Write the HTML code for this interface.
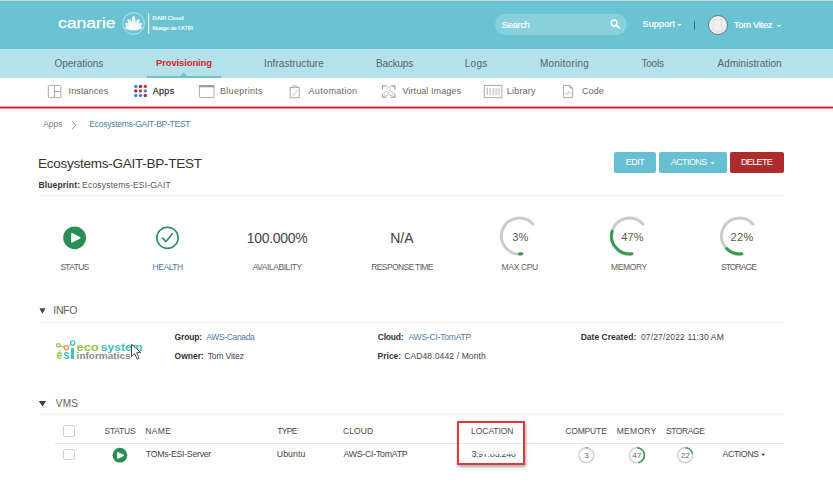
<!DOCTYPE html>
<html><head><meta charset="utf-8">
<style>
*{margin:0;padding:0;box-sizing:border-box}
html,body{width:833px;height:485px;overflow:hidden;background:#fff;font-family:"Liberation Sans",sans-serif}
.a{position:absolute}
.t{position:absolute;white-space:pre;line-height:1;font-family:"Liberation Sans",sans-serif}
svg{position:absolute;left:0;top:0}
</style></head><body>
<!-- header -->
<div class="a" style="left:0;top:0;width:833px;height:1px;background:#c6d3d8"></div>
<div class="a" style="left:0;top:1px;width:833px;height:48px;background:#69c3d3"></div>
<!-- nav -->
<div class="a" style="left:0;top:49px;width:833px;height:29px;background:#b3e2ea"></div>
<div class="a" style="left:147px;top:76px;width:74px;height:2px;background:#69c3d3"></div>
<!-- red line -->

<div class="a" style="left:0;top:108px;width:833px;height:5px;background:linear-gradient(#e6e9eb,#fff)"></div>
<!-- search pill -->
<div class="a" style="left:494.5px;top:14.3px;width:132px;height:20.7px;border-radius:10.4px;background:#88d0dc"></div>
<!-- avatar -->
<div class="a" style="left:707.6px;top:14.6px;width:20px;height:20px;border-radius:50%;background:#eeeeee;border:1.3px solid #6a777c"></div>
<!-- separators -->
<div class="a" style="left:39px;top:195px;width:745px;height:1px;background:#f1f1f1"></div>
<div class="a" style="left:39px;top:322px;width:745px;height:1px;background:#f1f1f1"></div>
<div class="a" style="left:39px;top:414px;width:745px;height:1px;background:#f1f1f1"></div>
<div class="a" style="left:55px;top:442.5px;width:729px;height:1px;background:#e6e6e6"></div>
<!-- buttons -->
<div class="a" style="left:614.4px;top:152.2px;width:41.6px;height:20.4px;border-radius:2px;background:#66c0d1"></div>
<div class="a" style="left:659px;top:152.2px;width:68.3px;height:20.4px;border-radius:2px;background:#66c0d1"></div>
<div class="a" style="left:729.9px;top:152.2px;width:54px;height:20.4px;border-radius:2px;background:#ad2d2f"></div>
<!-- checkboxes -->
<div class="a" style="left:62.7px;top:425.2px;width:12px;height:11.5px;border:1px solid #cfcfcf;border-radius:2px"></div>
<div class="a" style="left:62.7px;top:448.9px;width:12px;height:11.5px;border:1px solid #cfcfcf;border-radius:2px"></div>
<!-- red annotation box -->
<div class="a" style="left:457.3px;top:421.1px;width:68.2px;height:44.3px;border:2px solid #e0383c;box-shadow:1px 2px 3px rgba(0,0,0,.35)"></div>

<svg width="833" height="485" viewBox="0 0 833 485">
 <rect x="0" y="106.6" width="833" height="1.8" fill="#d21c22"/>
 <!-- nav triangle -->
 <path d="M179.7 76.2 L183.7 72.6 L187.7 76.2 Z" fill="#69c3d3"/>
 <!-- maple circle -->
 <circle cx="133.6" cy="23.4" r="10.8" fill="none" stroke="rgba(255,255,255,.55)" stroke-width="1"/>
 <g fill="rgba(255,255,255,.85)"><ellipse cx="133.6" cy="22.70" rx="2.0" ry="6.90" transform="rotate(0 133.6 29.6)"/><ellipse cx="133.6" cy="23.50" rx="1.8" ry="6.10" transform="rotate(28 133.6 29.6)"/><ellipse cx="133.6" cy="23.50" rx="1.8" ry="6.10" transform="rotate(-28 133.6 29.6)"/><ellipse cx="133.6" cy="24.30" rx="1.8" ry="5.30" transform="rotate(52 133.6 29.6)"/><ellipse cx="133.6" cy="24.30" rx="1.8" ry="5.30" transform="rotate(-52 133.6 29.6)"/><ellipse cx="133.6" cy="25.00" rx="1.5" ry="4.60" transform="rotate(76 133.6 29.6)"/><ellipse cx="133.6" cy="25.00" rx="1.5" ry="4.60" transform="rotate(-76 133.6 29.6)"/><rect x="131.1" y="28.6" width="5" height="1.6"/></g>
 <rect x="148" y="13" width="1.3" height="20.7" fill="rgba(255,255,255,.85)"/>
 <!-- search icon -->
 <circle cx="614.1" cy="23" r="2.9" fill="none" stroke="#fff" stroke-width="1.5"/>
 <path d="M616.3 25.2 L619.2 28" stroke="#fff" stroke-width="1.7" stroke-linecap="round"/>
 <!-- carets -->
 <path d="M677.2 23.9 L681.6 23.9 L679.4 25.9 Z" fill="#fff"/>
 <path d="M776.8 24.9 L781.4 24.9 L779.1 27 Z" fill="#fff"/>
 <rect x="694" y="20.8" width="1" height="9" fill="#3f6f7c"/>
 <!-- avatar silhouette -->
 <path d="M713 19 Q717.6 21 722.2 19 L721 25 L723 30 Q717.6 33 712.2 30 L714.2 25 Z" fill="none" stroke="#dcdcdc" stroke-width=".8"/>
 <!-- subnav icons -->
 <g fill="none" stroke="#a9a9a9" stroke-width="1">
  <rect x="48.3" y="85.4" width="12.6" height="12.3" rx="1"/>
  <path d="M54.5 85.4 V97.7 M54.5 91.5 H60.9"/>
  <rect x="199.4" y="85.6" width="14.6" height="12" rx="0.8"/>
  <rect x="290.2" y="87.4" width="9" height="10.3"/>
  <path d="M292.2 87.6 Q292.5 85.8 294.7 85.6 Q296.9 85.8 297.2 87.6 Z" fill="#fff"/>
  <rect x="484.3" y="85.4" width="17.6" height="12.3"/>
  <path d="M563.4 85.4 H570 L572.6 88 V97.7 H563.4 Z"/>
 </g>
 <rect x="199" y="85.1" width="15.4" height="2.2" fill="#9d9d9d"/>
 <path d="M292.5 93.5 L294 95.5 L297.5 90" fill="none" stroke="#cfcfcf" stroke-width="1"/>
 <g stroke="#b8b8b8" stroke-width="1.1">
  <path d="M487.2 88 V94.8 M490.1 88 V94.8 M493.2 88 V94.8 M496.1 88 V94.8 M499 88 V94.8"/>
 </g>
 <path d="M570 85.4 V88 H572.6" fill="#cfcfcf" stroke="#a9a9a9" stroke-width="1"/>
 <path d="M566.6 91.9 L565.4 93.1 L566.6 94.3 M569.6 91.9 L570.8 93.1 L569.6 94.3 M568.6 91.5 L567.6 94.7" fill="none" stroke="#a8a8a8" stroke-width=".8"/>
 <g fill="none" stroke="#a0a0a0" stroke-width="1.2">
  <path d="M382.5 89.5 V85.8 H386.5 M390.9 85.8 H394.9 V89.5 M394.9 93.4 V97.1 H390.9 M386.5 97.1 H382.5 V93.4"/>
 </g>
 <g fill="none" stroke="#c4c4c4" stroke-width="0.9">
  <circle cx="388.7" cy="88.7" r="1.7"/><circle cx="386.3" cy="93.5" r="2.2"/><circle cx="391.1" cy="93.5" r="2.2"/>
 </g>
 <!-- apps dots -->
 <g>
  <circle cx="135.8" cy="86.4" r="1.7" fill="#348cd0"/><circle cx="140.5" cy="86.4" r="1.7" fill="#b0262f"/><circle cx="145.3" cy="86.4" r="1.7" fill="#d2343e"/>
  <circle cx="135.8" cy="90.9" r="1.7" fill="#b0262f"/><circle cx="140.5" cy="90.9" r="1.7" fill="#d2343e"/><circle cx="145.3" cy="90.9" r="1.7" fill="#348cd0"/>
  <circle cx="135.8" cy="95.5" r="1.7" fill="#348cd0"/><circle cx="140.5" cy="95.5" r="1.7" fill="#348cd0"/><circle cx="145.3" cy="95.5" r="1.7" fill="#b0262f"/>
 </g>
 <path d="M39.4 308.2 H45.6 L42.5 313.7 Z" fill="#444"/>
 <path d="M38.8 401 H46.2 L42.5 406.5 Z" fill="#444"/>
 <!-- breadcrumb chevron -->
 <path d="M72.2 121.6 L76 125.3 L72.2 129" fill="none" stroke="#8a8a8a" stroke-width="1"/>
 <!-- button carets -->
 <path d="M710.4 162.2 L714.8 162.2 L712.6 164.2 Z" fill="#fff"/>
 <path d="M761 453.8 L765.3 453.8 L763.15 455.9 Z" fill="#444"/>
 <!-- status play -->
 <circle cx="74.6" cy="237.8" r="11.4" fill="#2a8c57"/>
 <path d="M71.2 233.6 Q71.2 232.6 72.2 233.1 L80.2 237.2 Q81 237.8 80.2 238.4 L72.2 242.5 Q71.2 243 71.2 242 Z" fill="#fff"/>
 <!-- health -->
 <circle cx="167.5" cy="237.8" r="10.6" fill="none" stroke="#2a8c57" stroke-width="1.6"/>
 <path d="M162.6 238 L166 241.6 L172.6 233.6" fill="none" stroke="#2a8c57" stroke-width="1.6" stroke-linecap="round" stroke-linejoin="round"/>
 <path d="M521.75 253.85 A18 18 0 1 1 533.68 225.04" fill="none" stroke="#cccccc" stroke-width="3" stroke-linecap="butt"/>
<path d="M521.75 253.85 A18 18 0 0 1 519.49 254.00" fill="none" stroke="#3a9a4c" stroke-width="3" stroke-linecap="round"/>
<path d="M631.85 253.85 A18 18 0 1 1 643.78 225.04" fill="none" stroke="#cccccc" stroke-width="3" stroke-linecap="butt"/>
<path d="M631.85 253.85 A18 18 0 0 1 612.14 231.25" fill="none" stroke="#3a9a4c" stroke-width="3" stroke-linecap="round"/>
<path d="M741.85 253.85 A18 18 0 1 1 753.78 225.04" fill="none" stroke="#cccccc" stroke-width="3" stroke-linecap="butt"/>
<path d="M741.85 253.85 A18 18 0 0 1 726.71 248.66" fill="none" stroke="#3a9a4c" stroke-width="3" stroke-linecap="round"/>
<circle cx="586.3" cy="455.3" r="7.5" fill="none" stroke="#d0d0d0" stroke-width="1.5"/>
<path d="M586.30 447.80 A7.5 7.5 0 0 1 587.71 447.93" fill="none" stroke="#3a9a4c" stroke-width="1.5" stroke-linecap="butt"/>
<circle cx="636.9" cy="455.3" r="7.5" fill="none" stroke="#d0d0d0" stroke-width="1.5"/>
<path d="M636.90 447.80 A7.5 7.5 0 0 1 638.31 462.67" fill="none" stroke="#3a9a4c" stroke-width="1.5" stroke-linecap="butt"/>
<circle cx="685.2" cy="455.3" r="7.5" fill="none" stroke="#d0d0d0" stroke-width="1.5"/>
<path d="M685.20 447.80 A7.5 7.5 0 0 1 692.57 453.89" fill="none" stroke="#3a9a4c" stroke-width="1.5" stroke-linecap="butt"/>
 <!-- table play -->
 <circle cx="119.9" cy="455.2" r="7.4" fill="#2a8c57"/>
 <path d="M117.6 452.3 L124 455.4 L117.6 458.5 Z" fill="#fff" stroke="#fff" stroke-width=".8" stroke-linejoin="round"/>
 <!-- eco logo -->
 <g fill="none" stroke-width="1">
  <path d="M59.8 345.6 L64.6 347.4 M68 346.6 L71.2 344" stroke="#8cc63f"/>
  <circle cx="58.3" cy="345.4" r="1.8" stroke="#8cc63f" stroke-width="1.3"/>
  <circle cx="66.4" cy="347.7" r="2.1" stroke="#f0924c" stroke-width="1.3"/>
  <circle cx="72.7" cy="343" r="2.1" stroke="#3fbfbf" stroke-width="1.3"/>
 </g>
</svg>
<div class="a" style="left:71px;top:347.7px;width:2.9px;height:10.9px;background:#3dbfbf"></div>

<div class="t" style="left:152.28px;top:15.00px;font-size:6.0px;font-weight:700;color:rgba(255,255,255,.92);letter-spacing:-0.213px;">DAIR Cloud</div>
<div class="t" style="left:152.28px;top:25.00px;font-size:6.0px;font-weight:700;color:rgba(255,255,255,.92);letter-spacing:-0.336px;">Nuage de l’ATIR</div>
<div class="t" style="left:501.72px;top:20.00px;font-size:9.5px;font-weight:400;color:#fff;letter-spacing:-0.415px;-webkit-text-stroke:.15px #fff;">Search</div>
<div class="t" style="left:642.55px;top:20.00px;font-size:9.0px;font-weight:400;color:#fff;letter-spacing:0.158px;-webkit-text-stroke:.2px #fff;">Support</div>
<div class="t" style="left:733.82px;top:21.00px;font-size:9.25px;font-weight:400;color:#fff;letter-spacing:-0.222px;-webkit-text-stroke:.2px #fff;">Tom Vitez</div>
<div class="t" style="left:54.50px;top:59.00px;font-size:10.0px;font-weight:400;color:#59656a;letter-spacing:-0.011px;">Operations</div>
<div class="t" style="left:156.03px;top:58.00px;font-size:9.5px;font-weight:700;color:#d4262c;letter-spacing:-0.140px;">Provisioning</div>
<div class="t" style="left:264.10px;top:59.00px;font-size:10.0px;font-weight:400;color:#59656a;letter-spacing:0.062px;">Infrastructure</div>
<div class="t" style="left:376.10px;top:59.00px;font-size:10.0px;font-weight:400;color:#59656a;letter-spacing:-0.217px;">Backups</div>
<div class="t" style="left:464.80px;top:59.00px;font-size:10.0px;font-weight:400;color:#59656a;letter-spacing:0.233px;">Logs</div>
<div class="t" style="left:539.90px;top:59.00px;font-size:10.0px;font-weight:400;color:#59656a;letter-spacing:0.256px;">Monitoring</div>
<div class="t" style="left:641.40px;top:59.00px;font-size:10.0px;font-weight:400;color:#59656a;letter-spacing:-0.175px;">Tools</div>
<div class="t" style="left:717.60px;top:59.00px;font-size:10.0px;font-weight:400;color:#59656a;letter-spacing:0.054px;">Administration</div>
<div class="t" style="left:68.49px;top:87.00px;font-size:9.0px;font-weight:400;color:#666;letter-spacing:0.156px;">Instances</div>
<div class="t" style="left:152.80px;top:87.00px;font-size:9.0px;font-weight:400;color:#3f3f3f;letter-spacing:0.280px;-webkit-text-stroke:.3px #3f3f3f;">Apps</div>
<div class="t" style="left:220.08px;top:87.00px;font-size:9.0px;font-weight:400;color:#666;letter-spacing:0.270px;">Blueprints</div>
<div class="t" style="left:308.50px;top:87.00px;font-size:9.0px;font-weight:400;color:#666;letter-spacing:0.343px;">Automation</div>
<div class="t" style="left:402.51px;top:87.00px;font-size:9.0px;font-weight:400;color:#666;letter-spacing:0.079px;">Virtual Images</div>
<div class="t" style="left:506.78px;top:87.00px;font-size:9.0px;font-weight:400;color:#666;letter-spacing:0.212px;">Library</div>
<div class="t" style="left:581.95px;top:87.00px;font-size:9.0px;font-weight:400;color:#666;letter-spacing:0.133px;">Code</div>
<div class="t" style="left:43.30px;top:120.00px;font-size:8.5px;font-weight:400;color:#7a7a7a;letter-spacing:-0.113px;">Apps</div>
<div class="t" style="left:89.22px;top:120.00px;font-size:8.5px;font-weight:400;color:#4b7ba3;letter-spacing:-0.246px;">Ecosystems-GAIT-BP-TEST</div>
<div class="t" style="left:38.02px;top:157.00px;font-size:13.5px;font-weight:400;color:#333;letter-spacing:-0.255px;">Ecosystems-GAIT-BP-TEST</div>
<div class="t" style="left:38.41px;top:181.00px;font-size:8.5px;font-weight:700;color:#333;letter-spacing:0.169px;">Blueprint:</div>
<div class="t" style="left:82.12px;top:181.00px;font-size:8.5px;font-weight:400;color:#555;letter-spacing:0.197px;">Ecosystems-ESI-GAIT</div>
<div class="t" style="left:625.68px;top:158.00px;font-size:9.0px;font-weight:400;color:#fff;letter-spacing:-0.440px;">EDIT</div>
<div class="t" style="left:670.80px;top:158.00px;font-size:9.0px;font-weight:400;color:#fff;letter-spacing:-0.600px;">ACTIONS</div>
<div class="t" style="left:740.98px;top:158.00px;font-size:9.0px;font-weight:400;color:#fff;letter-spacing:-0.646px;">DELETE</div>
<div class="t" style="left:246.78px;top:231.00px;font-size:14.0px;font-weight:400;color:#444;letter-spacing:-0.309px;">100.000%</div>
<div class="t" style="left:390.18px;top:231.00px;font-size:14.0px;font-weight:400;color:#444;letter-spacing:0.040px;">N/A</div>
<div class="t" style="left:512.36px;top:232.00px;font-size:11.0px;font-weight:400;color:#555;letter-spacing:-0.070px;">3%</div>
<div class="t" style="left:621.18px;top:232.00px;font-size:11.0px;font-weight:400;color:#555;letter-spacing:0.125px;">47%</div>
<div class="t" style="left:730.45px;top:232.00px;font-size:11.0px;font-weight:400;color:#555;letter-spacing:0.440px;">22%</div>
<div class="t" style="left:60.38px;top:263.00px;font-size:8.5px;font-weight:400;color:#5e5e5e;letter-spacing:-0.670px;">STATUS</div>
<div class="t" style="left:152.52px;top:263.00px;font-size:8.5px;font-weight:400;color:#4b7ba3;letter-spacing:-0.447px;">HEALTH</div>
<div class="t" style="left:252.50px;top:263.00px;font-size:8.5px;font-weight:400;color:#5e5e5e;letter-spacing:-0.430px;">AVAILABILITY</div>
<div class="t" style="left:371.32px;top:263.00px;font-size:8.5px;font-weight:400;color:#5e5e5e;letter-spacing:-0.632px;">RESPONSE TIME</div>
<div class="t" style="left:501.62px;top:263.00px;font-size:8.5px;font-weight:400;color:#5e5e5e;letter-spacing:-0.350px;">MAX CPU</div>
<div class="t" style="left:611.12px;top:263.00px;font-size:8.5px;font-weight:400;color:#5e5e5e;letter-spacing:-0.386px;">MEMORY</div>
<div class="t" style="left:720.88px;top:263.00px;font-size:8.5px;font-weight:400;color:#5e5e5e;letter-spacing:-0.888px;">STORAGE</div>
<div class="t" style="left:53.35px;top:305.00px;font-size:10.5px;font-weight:400;color:#606060;letter-spacing:-0.375px;">INFO</div>
<div class="t" style="left:174.56px;top:333.00px;font-size:8.5px;font-weight:700;color:#333;letter-spacing:-0.160px;">Group:</div>
<div class="t" style="left:206.20px;top:333.00px;font-size:8.5px;font-weight:400;color:#4b7ba3;letter-spacing:-0.342px;">AWS-Canada</div>
<div class="t" style="left:174.56px;top:352.00px;font-size:8.5px;font-weight:700;color:#333;letter-spacing:-0.007px;">Owner:</div>
<div class="t" style="left:207.63px;top:352.00px;font-size:8.5px;font-weight:400;color:#444;letter-spacing:-0.106px;">Tom Vitez</div>
<div class="t" style="left:377.86px;top:333.00px;font-size:8.5px;font-weight:700;color:#333;letter-spacing:-0.251px;">Cloud:</div>
<div class="t" style="left:408.40px;top:333.00px;font-size:8.5px;font-weight:400;color:#4b7ba3;letter-spacing:-0.190px;">AWS-CI-TomATP</div>
<div class="t" style="left:377.60px;top:352.00px;font-size:8.5px;font-weight:700;color:#333;letter-spacing:-0.017px;">Price:</div>
<div class="t" style="left:404.18px;top:352.00px;font-size:8.5px;font-weight:400;color:#444;letter-spacing:0.131px;">CAD48.0442 / Month</div>
<div class="t" style="left:580.70px;top:333.00px;font-size:8.5px;font-weight:700;color:#333;letter-spacing:0.026px;">Date Created:</div>
<div class="t" style="left:640.96px;top:333.00px;font-size:8.5px;font-weight:400;color:#444;letter-spacing:0.143px;">07/27/2022 11:30 AM</div>
<div class="t" style="left:55.80px;top:399.00px;font-size:10.0px;font-weight:400;color:#606060;letter-spacing:0.200px;">VMS</div>
<div class="t" style="left:104.48px;top:427.00px;font-size:8.5px;font-weight:400;color:#4a4a4a;letter-spacing:-0.230px;">STATUS</div>
<div class="t" style="left:145.32px;top:427.00px;font-size:8.5px;font-weight:400;color:#4a4a4a;letter-spacing:0.318px;">NAME</div>
<div class="t" style="left:277.33px;top:427.00px;font-size:8.5px;font-weight:400;color:#4a4a4a;letter-spacing:-0.725px;">TYPE</div>
<div class="t" style="left:342.97px;top:427.00px;font-size:8.5px;font-weight:400;color:#4a4a4a;letter-spacing:0.075px;">CLOUD</div>
<div class="t" style="left:471.12px;top:427.00px;font-size:8.5px;font-weight:400;color:#4a4a4a;letter-spacing:-0.069px;">LOCATION</div>
<div class="t" style="left:565.18px;top:427.00px;font-size:8.5px;font-weight:400;color:#4a4a4a;letter-spacing:-0.139px;">COMPUTE</div>
<div class="t" style="left:616.72px;top:427.00px;font-size:8.5px;font-weight:400;color:#4a4a4a;letter-spacing:0.294px;">MEMORY</div>
<div class="t" style="left:665.98px;top:427.00px;font-size:8.5px;font-weight:400;color:#4a4a4a;letter-spacing:-0.422px;">STORAGE</div>
<div class="t" style="left:145.82px;top:450.00px;font-size:8.75px;font-weight:400;color:#444;letter-spacing:-0.281px;">TOMs-ESI-Server</div>
<div class="t" style="left:276.80px;top:450.00px;font-size:8.75px;font-weight:400;color:#444;letter-spacing:0.050px;">Ubuntu</div>
<div class="t" style="left:343.40px;top:450.00px;font-size:8.75px;font-weight:400;color:#444;letter-spacing:-0.232px;">AWS-CI-TomATP</div>
<div class="t" style="left:471.45px;top:450.00px;font-size:8.75px;font-weight:400;color:#444;letter-spacing:-0.180px;">3.97.03.240</div>
<div class="t" style="left:722.60px;top:450.00px;font-size:8.75px;font-weight:400;color:#444;letter-spacing:-0.433px;">ACTIONS</div>
<div class="t" style="left:584.18px;top:452.00px;font-size:8.0px;font-weight:400;color:#666;letter-spacing:0.000px;">3</div>
<div class="t" style="left:632.24px;top:452.00px;font-size:8.0px;font-weight:400;color:#666;letter-spacing:0.280px;">47</div>
<div class="t" style="left:681.10px;top:452.00px;font-size:8.0px;font-weight:400;color:#666;letter-spacing:-0.280px;">22</div>
<div class="a" style="left:478.5px;top:450px;width:37.5px;height:4.2px;background:rgba(255,255,255,.85)"></div>
<svg width="833" height="485" viewBox="0 0 833 485" style="font-family:'Liberation Sans'">
 <text x="58" y="27.5" font-size="15.5" fill="#fff" stroke="#fff" stroke-width=".25" textLength="57.6" lengthAdjust="spacingAndGlyphs">canarie</text>
 <text x="76.6" y="350.8" font-size="10" font-weight="700" fill="#8dc63f" textLength="22" lengthAdjust="spacingAndGlyphs">eco</text>
 <text x="100.8" y="350.8" font-size="10" font-weight="700" fill="#3dbfbf" textLength="41.8" lengthAdjust="spacingAndGlyphs">system</text>
 <text x="76.6" y="358.8" font-size="8.5" font-weight="700" fill="#8a8a8a" textLength="54" lengthAdjust="spacingAndGlyphs">informatics</text>
 <text x="56.4" y="358.8" font-size="12" font-weight="700" fill="#8dc63f" textLength="5.8" lengthAdjust="spacingAndGlyphs">é</text>
 <text x="63.3" y="358.8" font-size="12" font-weight="700" fill="#3dbfbf" textLength="6.2" lengthAdjust="spacingAndGlyphs">s</text>
</svg>

<svg width="833" height="485" viewBox="0 0 833 485">
 <path d="M131.5 344.2 L131.5 356.5 L134.6 353.6 L137.3 359.2 L139.2 358.3 L136.6 352.8 L140.7 352.6 Z" fill="#fff" stroke="#333" stroke-width=".9" stroke-linejoin="round"/>
</svg>
</body></html>
